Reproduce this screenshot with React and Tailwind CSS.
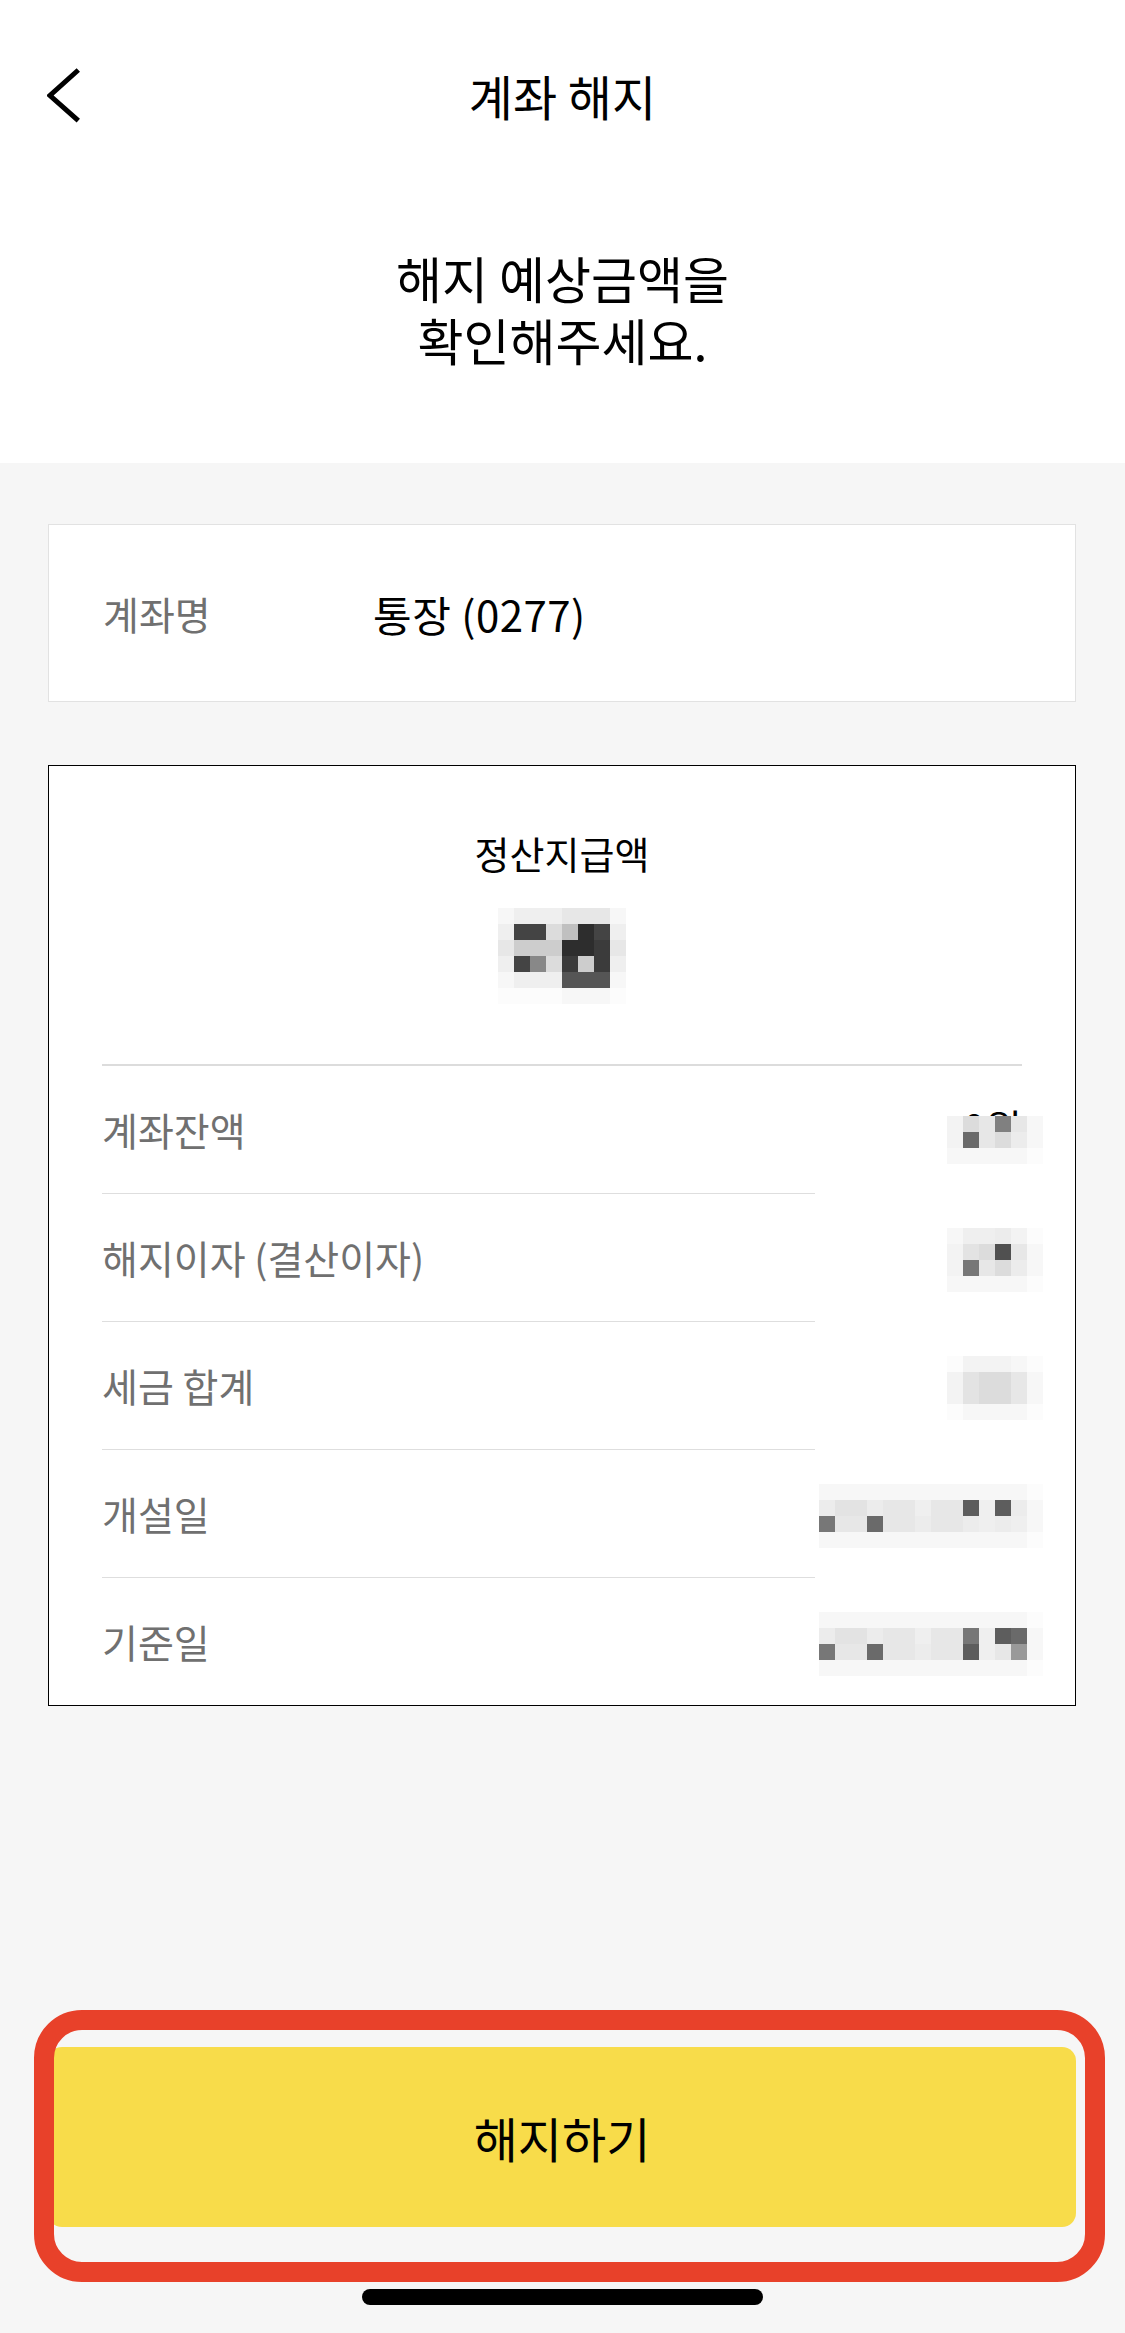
const SHADES = {
  0: "bg-[#fcfcfc]",
  1: "bg-[#f7f7f7]",
  2: "bg-[#efefef]",
  3: "bg-[#e7e7e7]",
  4: "bg-[#dcdcdc]",
  5: "bg-[#cdcdcd]",
  6: "bg-[#c0c0c0]",
  7: "bg-[#999999]",
  8: "bg-[#888888]",
  9: "bg-[#777777]",
  a: "bg-[#6a6a6a]",
  b: "bg-[#5d5d5d]",
  c: "bg-[#555555]",
  e: "bg-[#444444]",
  f: "bg-[#3b3b3b]",
  g: "bg-[#2d2d2d]",
  h: "bg-[#808080]",
  i: "bg-[#505050]",
  j: "bg-[#f3f3f3]",
  k: "bg-[#ececec]",
  l: "bg-[#e3e3e3]",
};

const AMOUNT = ["12223331", "2ee46ge2", "3555ggf3", "2e84f5f2", "1222ccc1", "00001110"];

const HIDDEN = [
  { pos: "left-[132px] -top-[2px]", rows: ["j43h31", "ja34k1", "111110"] },
  { pos: "left-[132px] top-[110px]", rows: ["122kj0", "jl4i31", "j934k1", "111110"] },
  { pos: "left-[132px] top-[238px]", rows: ["0jjj10", "jl4431", "jl4431", "011110"] },
  {
    pos: "left-[4px] top-[366px]",
    rows: ["11111111111110", "kllk33233b2bk1", "933a33k33k2k21", "11111111111110"],
  },
  {
    pos: "left-[4px] top-[494px]",
    rows: ["11111111111110", "kllk3323392ba1", "933a33k33b2371", "11111111111110"],
  },
];

const ROWS = ["계좌잔액", "해지이자 (결산이자)", "세금 합계", "개설일", "기준일"];

function Mosaic({ rows }) {
  return (
    <div className="flex flex-col">
      {rows.map((row, r) => (
        <div key={r} className="flex">
          {row.split("").map((c, i) => (
            <div key={i} className={`h-[16px] w-[16px] ${SHADES[c]}`} />
          ))}
        </div>
      ))}
    </div>
  );
}

export default function App() {
  return (
    <div className="flex h-[2333px] flex-col overflow-hidden bg-white font-['Noto_Sans_CJK_KR',sans-serif] text-black">
      {/* header + heading */}
      <div className="h-[463px] bg-white">
        <div className="grid h-[190px] grid-cols-[1fr_auto_1fr] items-center">
          <div className="pl-[47px]">
            <svg width="34" height="57" viewBox="0 0 34 57" fill="none">
              <path
                d="M31.3 3 L3 28.5 L31.3 53.7"
                stroke="#000"
                strokeWidth="5"
                strokeLinejoin="miter"
              />
            </svg>
          </div>
          <h1 className="text-[48px] leading-none font-normal">계좌 해지</h1>
          <div />
        </div>
        <div className="mt-[56px] text-center text-[50px] leading-[62px]">
          <p>해지 예상금액을</p>
          <p>확인해주세요.</p>
        </div>
      </div>

      <div className="flex flex-1 flex-col bg-[#f6f6f6] pt-[61px] pr-[49px] pl-[48px]">
        <div className="flex h-[178px] items-center border border-[#e2e2e2] bg-white pl-[54px]">
          <span className="w-[270px] text-[39px] text-[#707070]">계좌명</span>
          <span className="text-[42px] tracking-[0.5px]">통장 (0277)</span>
        </div>

        <div className="relative mt-[63px] border border-black bg-white px-[53px] pt-[64px]">
          <p className="text-center text-[38px] leading-[46px]">정산지급액</p>
          <div className="mt-[32px] flex justify-center">
            <Mosaic rows={AMOUNT} />
          </div>
          <div className="mt-[60px] h-[2px] bg-[#dcdcdc]" />
          {ROWS.map((label, i) => (
            <div
              key={label}
              className={
                i === ROWS.length - 1
                  ? "flex h-[127px] items-center justify-between"
                  : "flex h-[128px] items-center justify-between border-b border-[#dedede]"
              }
            >
              <span className="text-[39px] text-[#707070]">{label}</span>
              {i === 0 ? <span className="-mt-[6px] text-[40px]">0원</span> : null}
            </div>
          ))}

          {/* blurred values */}
          <div className="absolute top-[352px] left-[766px] h-[586px] w-[252px] bg-white">
            {HIDDEN.map((m, i) => (
              <div key={i} className={`absolute ${m.pos}`}>
                <Mosaic rows={m.rows} />
              </div>
            ))}
          </div>
        </div>

        <button
          type="button"
          className="relative mt-[341px] h-[180px] rounded-[14px] bg-[#f8dc4a] text-[48px]"
        >
          해지하기
          <span className="pointer-events-none absolute -top-[37px] -right-[29px] -bottom-[55px] -left-[14px] rounded-[48px] border-[20px] border-[#e8412a]" />
        </button>

        <div className="mx-auto mt-[62px] h-[16px] w-[401px] rounded-full bg-black" />
      </div>
    </div>
  );
}
